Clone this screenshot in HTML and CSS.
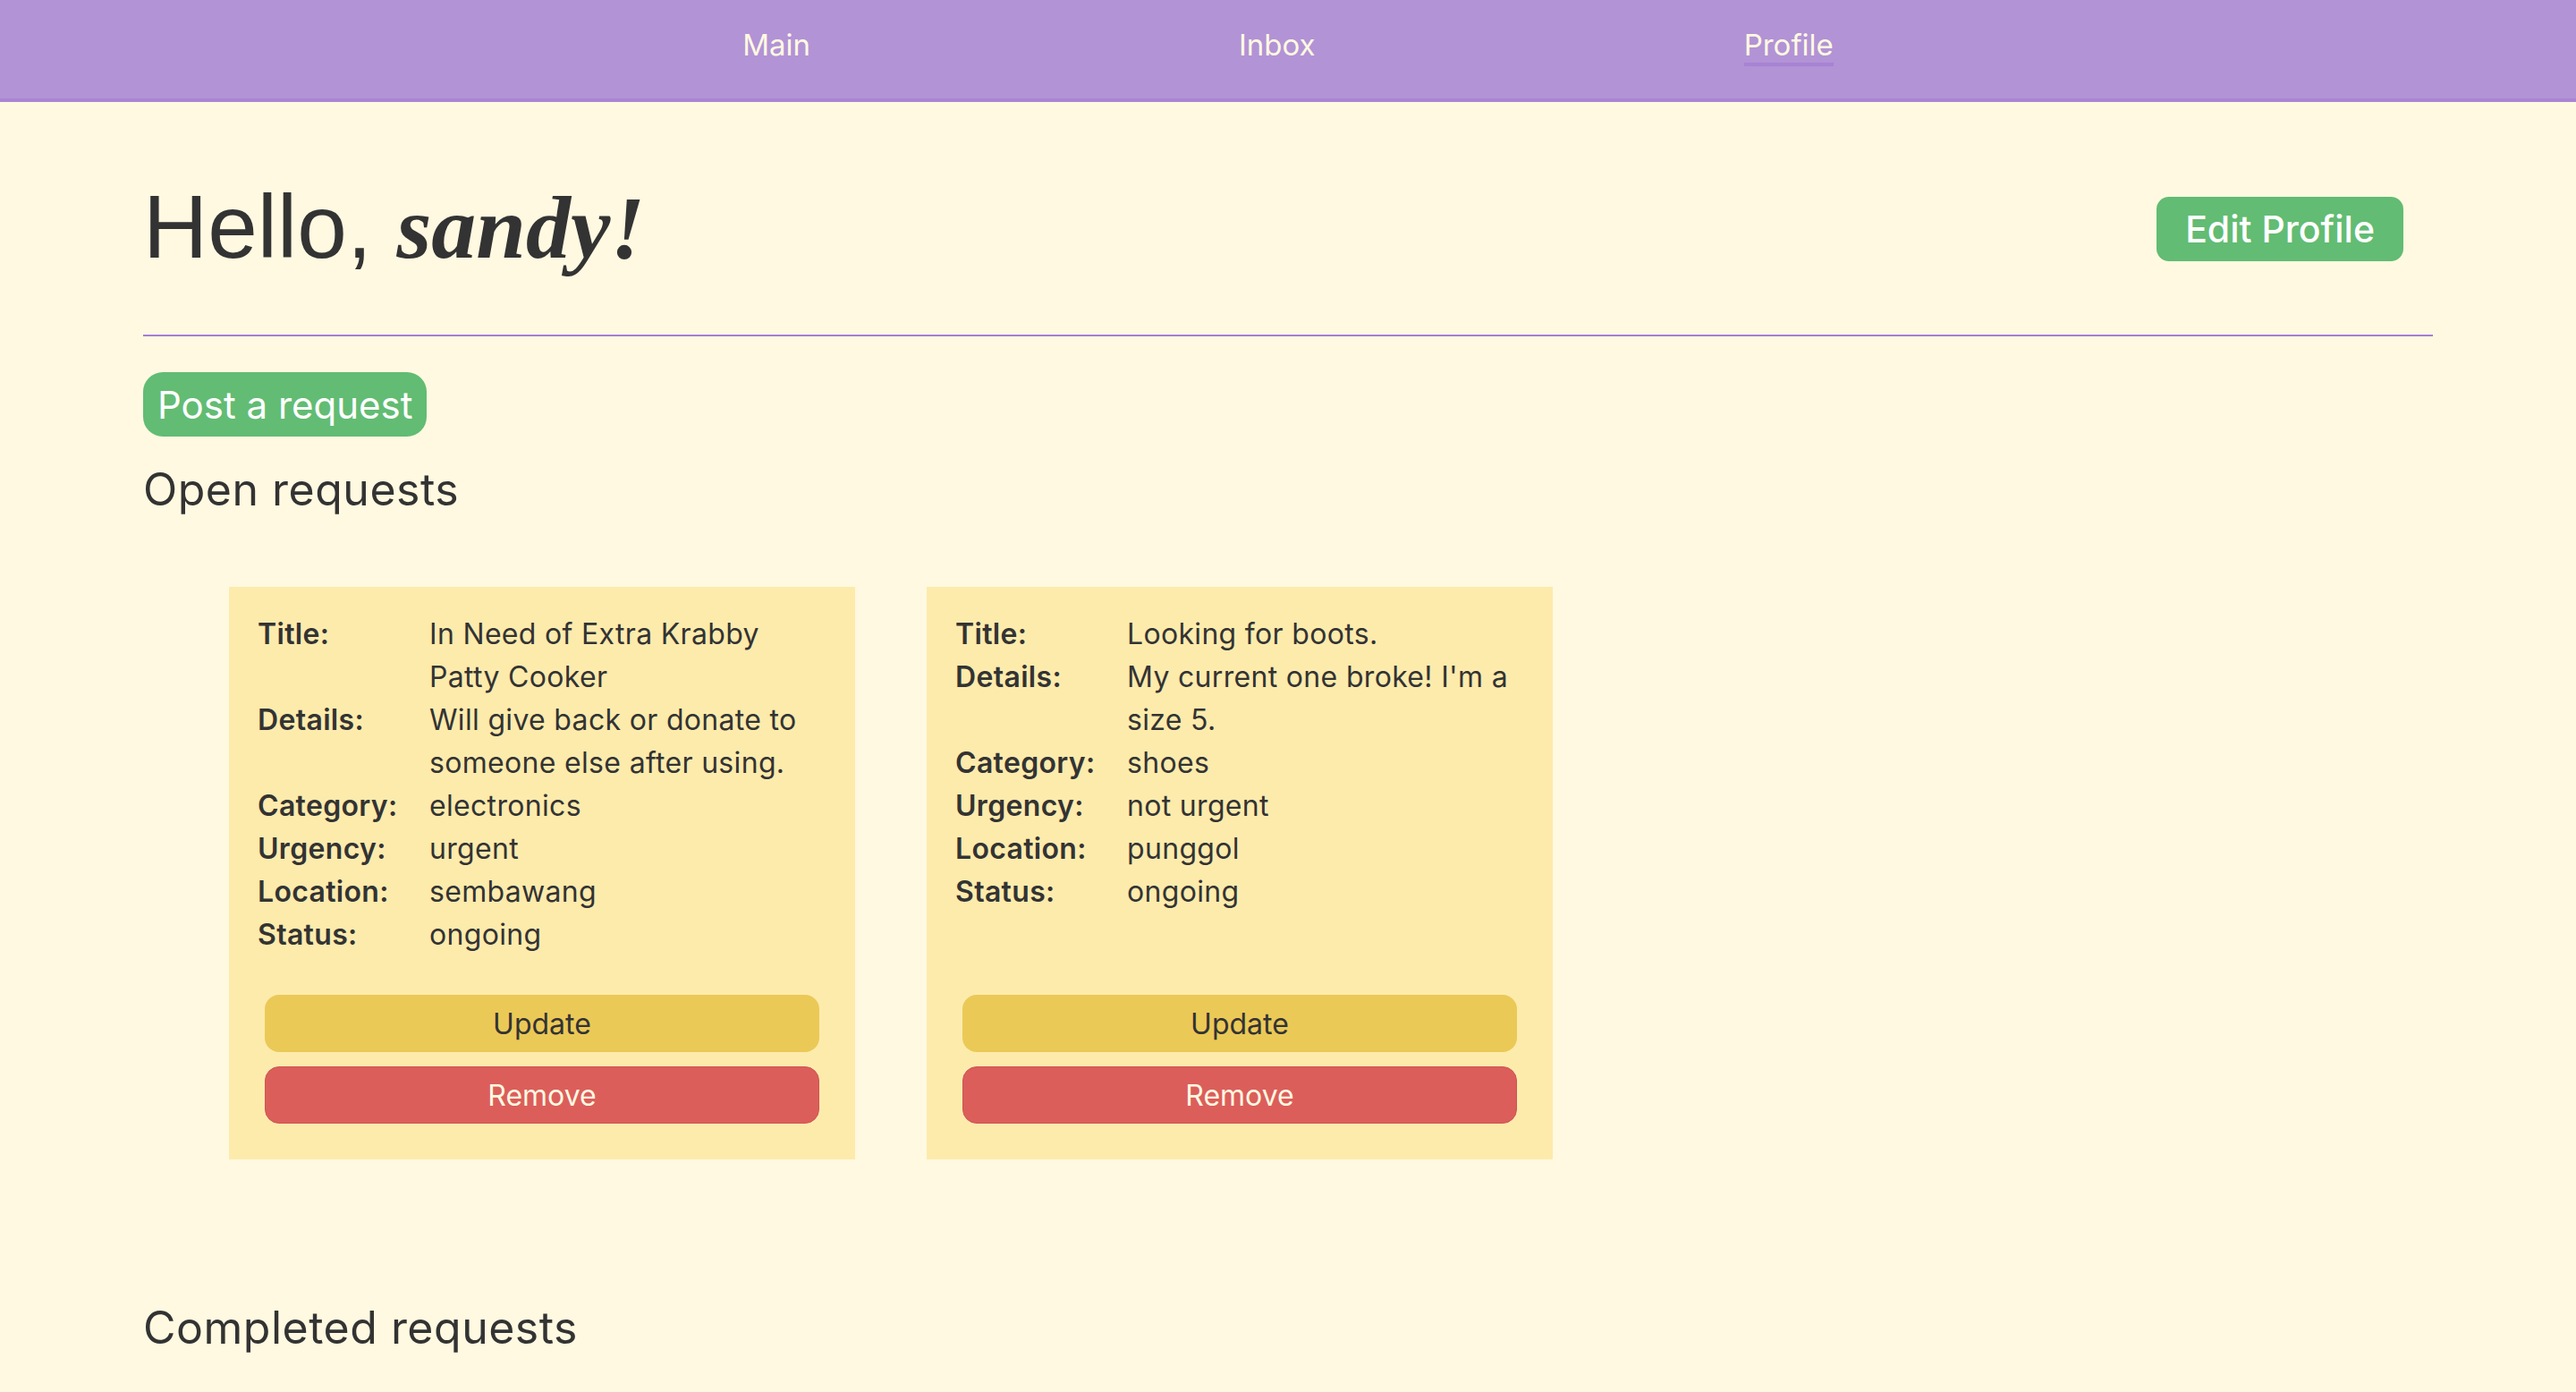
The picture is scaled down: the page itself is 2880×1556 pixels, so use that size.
FILE: index.html
```html
<!DOCTYPE html>
<html lang="en">
<head>
<meta charset="utf-8">
<title>Profile</title>
<link rel="stylesheet" href="styles.css">
</head>
<body>
<nav class="topnav">
  <a class="nav-link" href="#">Main</a>
  <a class="nav-link" href="#">Inbox</a>
  <a class="nav-link active" href="#">Profile</a>
</nav>
<main class="page">
  <header class="profile-header">
    <h1 class="greeting">Hello, <em class="name">sandy!</em></h1>
    <button class="btn btn-green edit-btn">Edit Profile</button>
  </header>
  <hr class="divider">
  <button class="btn btn-green post-btn">Post a request</button>
  <h2 class="section-title">Open requests</h2>
  <div class="card-list">
    <div class="card">
      <div class="info">
        <span class="label">Title:</span><span class="value">In Need of Extra Krabby Patty Cooker</span>
        <span class="label">Details:</span><span class="value">Will give back or donate to someone else after using.</span>
        <span class="label">Category:</span><span class="value">electronics</span>
        <span class="label">Urgency:</span><span class="value">urgent</span>
        <span class="label">Location:</span><span class="value">sembawang</span>
        <span class="label">Status:</span><span class="value">ongoing</span>
      </div>
      <div class="actions">
        <button class="card-btn update">Update</button>
        <button class="card-btn remove">Remove</button>
      </div>
    </div>
    <div class="card">
      <div class="info">
        <span class="label">Title:</span><span class="value">Looking for boots.</span>
        <span class="label">Details:</span><span class="value">My current one broke! I'm a size 5.</span>
        <span class="label">Category:</span><span class="value">shoes</span>
        <span class="label">Urgency:</span><span class="value">not urgent</span>
        <span class="label">Location:</span><span class="value">punggol</span>
        <span class="label">Status:</span><span class="value">ongoing</span>
      </div>
      <div class="actions">
        <button class="card-btn update">Update</button>
        <button class="card-btn remove">Remove</button>
      </div>
    </div>
  </div>
  <h2 class="section-title completed">Completed requests</h2>
</main>
</body>
</html>
```

FILE: styles.css
```css
html, body {
  margin: 0;
  padding: 0;
}

body {
  background: #fff9e1;
  color: #333333;
  font-family: Inter, Roboto, "Liberation Sans", sans-serif;
}

.topnav {
  box-sizing: border-box;
  height: 114px;
  padding-top: 30px;
  background: #b293d6;
  border-bottom: 4px solid #a985d3;
  display: flex;
  justify-content: center;
  align-items: flex-start;
  gap: 479px;
}

.nav-link {
  color: #fff9e1;
  text-decoration: none;
  font-size: 33px;
  line-height: 40px;
  border-bottom: 4px solid transparent;
}

.nav-link.active {
  border-bottom-color: #a883d3;
}

.page {
  margin: 0 160px;
  padding-top: 84px;
}

.profile-header {
  display: flex;
  justify-content: space-between;
  align-items: center;
}

.greeting {
  margin: 0;
  font-family: "Liberation Sans", Arial, sans-serif;
  font-weight: normal;
  font-size: 100px;
  line-height: 110px;
  color: #333333;
}

.name {
  font-family: "Liberation Serif", "Times New Roman", serif;
  font-style: italic;
  font-weight: bold;
}

.btn {
  border: none;
  font-family: Inter, Roboto, "Liberation Sans", sans-serif;
  font-size: 41px;
  font-weight: 500;
  color: #ffffff;
  cursor: pointer;
}

.btn-green {
  background: #62bc73;
}

.edit-btn {
  height: 72px;
  padding: 0 32px;
  border-radius: 14px;
  margin-right: 33px;
  margin-top: 4px;
}

.divider {
  border: none;
  height: 2px;
  background: #a47dd8;
  margin: 64px 0 0 0;
}

.post-btn {
  display: block;
  height: 72px;
  padding: 0 16px;
  border-radius: 22px;
  margin-top: 40px;
  font-size: 42px;
  font-weight: 400;
}

.section-title {
  margin: 29px 0 0 0;
  font-size: 50px;
  line-height: 60px;
  letter-spacing: 0.01em;
  font-weight: normal;
  color: #333333;
}

.section-title.completed {
  margin-top: 158px;
}

.card-list {
  display: flex;
  gap: 80px;
  padding-left: 96px;
  margin-top: 79px;
}

.card {
  box-sizing: border-box;
  width: 700px;
  background: #fdebac;
  padding: 29px 40px 40px;
  display: flex;
  flex-direction: column;
}

.info {
  display: grid;
  grid-template-columns: 192px 1fr;
  margin-left: -8px;
  font-size: 32px;
  line-height: 48px;
  letter-spacing: 0.01em;
}

.label {
  font-weight: 600;
}

.actions {
  margin-top: auto;
  padding-top: 43px;
  display: flex;
  flex-direction: column;
  gap: 16px;
}

.card-btn {
  height: 64px;
  border-radius: 16px;
  border: none;
  font-family: Inter, Roboto, "Liberation Sans", sans-serif;
  font-size: 32px;
  cursor: pointer;
}

.card-btn.update {
  background: #ebc957;
  color: #333333;
}

.card-btn.remove {
  background: #db5e5b;
  color: #fff9e1;
  border: 1px solid #cf5552;
}
```
